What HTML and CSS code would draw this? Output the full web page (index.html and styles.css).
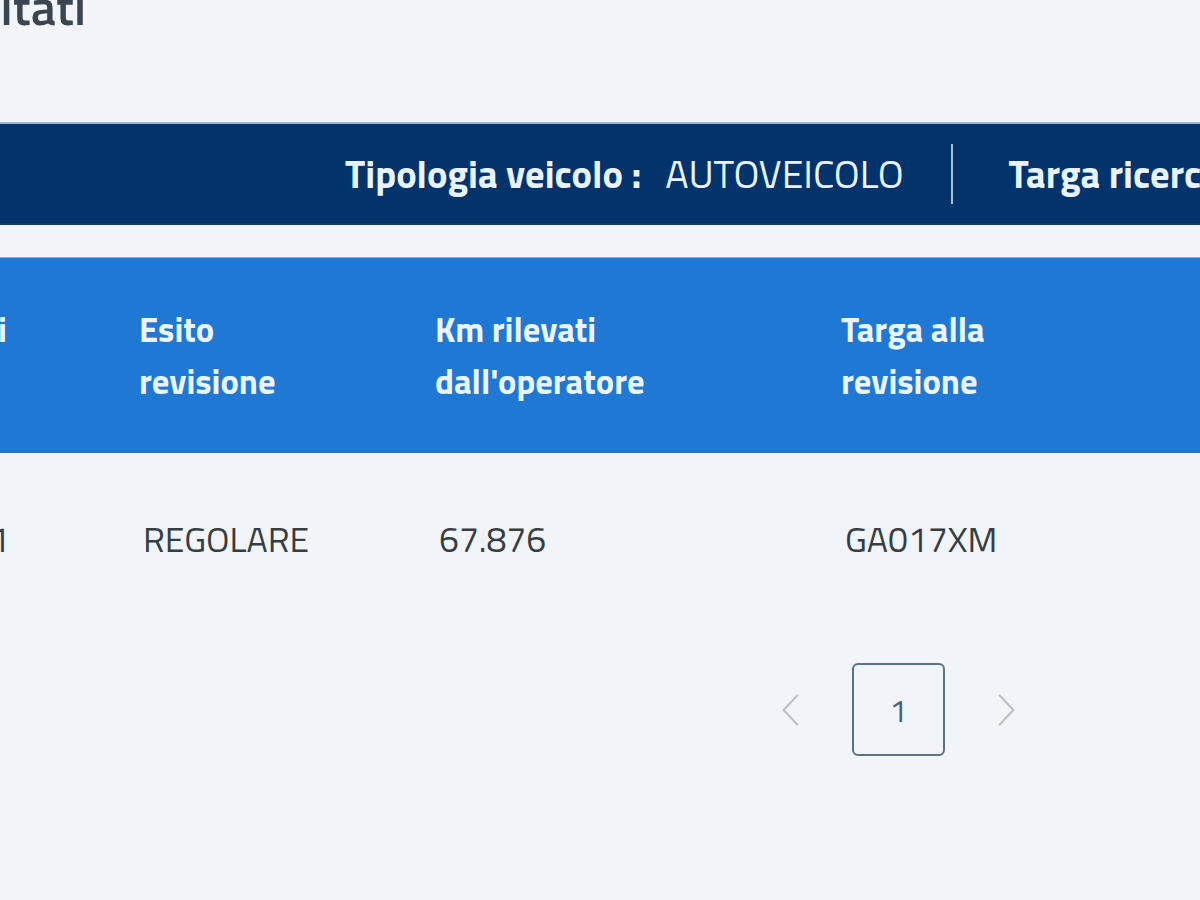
FILE: index.html
```html
<!DOCTYPE html>
<html lang="it">
<head>
<meta charset="utf-8">
<title>Risultati</title>
<link rel="stylesheet" href="styles.css">
</head>
<body>
<main class="page">
  <div class="title-wrap">
    <h1 class="page-title">Risultati</h1>
  </div>

  <section class="info-bar">
    <span class="info-label">Tipologia veicolo :</span>
    <span class="info-value">AUTOVEICOLO</span>
    <span class="info-divider"></span>
    <span class="info-label">Targa ricercata :</span>
    <span class="info-value">GA017XM</span>
  </section>

  <section class="results">
    <div class="table-head">
      <div class="cell cell-first"><span>Data revisioni<br>effettuate</span></div>
      <div class="cell">Esito<br>revisione</div>
      <div class="cell">Km rilevati<br>dall'operatore</div>
      <div class="cell">Targa alla<br>revisione</div>
    </div>
    <div class="table-row">
      <div class="cell cell-first"><span>12/05/2021</span></div>
      <div class="cell">REGOLARE</div>
      <div class="cell">67.876</div>
      <div class="cell">GA017XM</div>
    </div>
  </section>

  <nav class="pagination">
    <span class="page-arrow">
      <svg width="22" height="36" viewBox="0 0 22 36"><path d="M19 2 L4 18 L19 34" fill="none" stroke="currentColor" stroke-width="2.5" stroke-linecap="round" stroke-linejoin="round"/></svg>
    </span>
    <span class="page-current">1</span>
    <span class="page-arrow">
      <svg width="22" height="36" viewBox="0 0 22 36"><path d="M3 2 L18 18 L3 34" fill="none" stroke="currentColor" stroke-width="2.5" stroke-linecap="round" stroke-linejoin="round"/></svg>
    </span>
  </nav>
</main>
</body>
</html>
```

FILE: styles.css
```css
html, body {
  margin: 0;
  padding: 0;
  background: #f1f5f9;
  overflow: hidden;
}

.page {
  font-family: "Titillium Web", "Liberation Sans Narrow", "DejaVu Sans Condensed", Roboto, sans-serif;
  width: 1200px;
  height: 900px;
  overflow: hidden;
  display: flow-root;
}

.title-wrap {
  width: 86px;
  height: 48px;
  margin-top: -18px;
  display: flex;
  justify-content: flex-end;
}

.page-title {
  margin: 0;
  flex: none;
  font-size: 50px;
  line-height: 48px;
  font-weight: 600;
  color: #3b4550;
  white-space: nowrap;
}

.info-bar {
  margin-top: 92px;
  height: 99px;
  background: #02346b;
  border-top: 2px solid #9ab9d6;
  border-bottom: 2px solid #1b3b5e;
  display: flex;
  align-items: center;
  padding-left: 345px;
  white-space: nowrap;
  color: #e9f3fd;
  font-size: 38.5px;
}

.info-label {
  font-weight: 700;
  margin-right: 24px;
}

.info-value {
  font-weight: 400;
  font-size: 39.2px;
}

.info-divider {
  width: 2px;
  height: 60px;
  background: #a7bfd7;
  margin: 0 56px 0 47px;
  flex: none;
}

.results {
  margin-top: 32px;
}

.table-head,
.table-row {
  display: grid;
  grid-template-columns: 115px 296px 406px 1fr;
}

.table-head {
  height: 194px;
  background: #1f78d3;
  border-top: 1px solid #7fb2e6;
  border-bottom: 1px solid #3d6fa6;
  align-items: center;
  color: #eaf4ff;
  font-weight: 700;
  font-size: 34.5px;
  line-height: 52px;
}

.table-row {
  height: 172px;
  align-items: center;
  color: #363d44;
  font-size: 35.5px;
  font-weight: 400;
  background: #f1f5f9;
}

.cell {
  padding: 0 24px;
  white-space: nowrap;
  overflow: hidden;
}

.table-row .cell {
  padding-left: 28px;
}

.table-head .cell-first,
.table-row .cell-first {
  display: flex;
  justify-content: flex-end;
  padding: 0 108px 0 0;
}

.table-row .cell-first {
  padding-right: 105px;
}

.pagination {
  display: flex;
  align-items: center;
  justify-content: flex-end;
  padding-right: 183px;
  margin-top: 38px;
  gap: 52px;
}

.page-arrow {
  width: 20px;
  display: flex;
  justify-content: center;
  color: #bcc2c9;
}

.page-current {
  width: 89px;
  height: 89px;
  border: 2px solid #5c7282;
  border-radius: 6px;
  display: flex;
  align-items: center;
  justify-content: center;
  color: #4a5f6f;
  font-size: 32px;
  font-weight: 400;
}
```
